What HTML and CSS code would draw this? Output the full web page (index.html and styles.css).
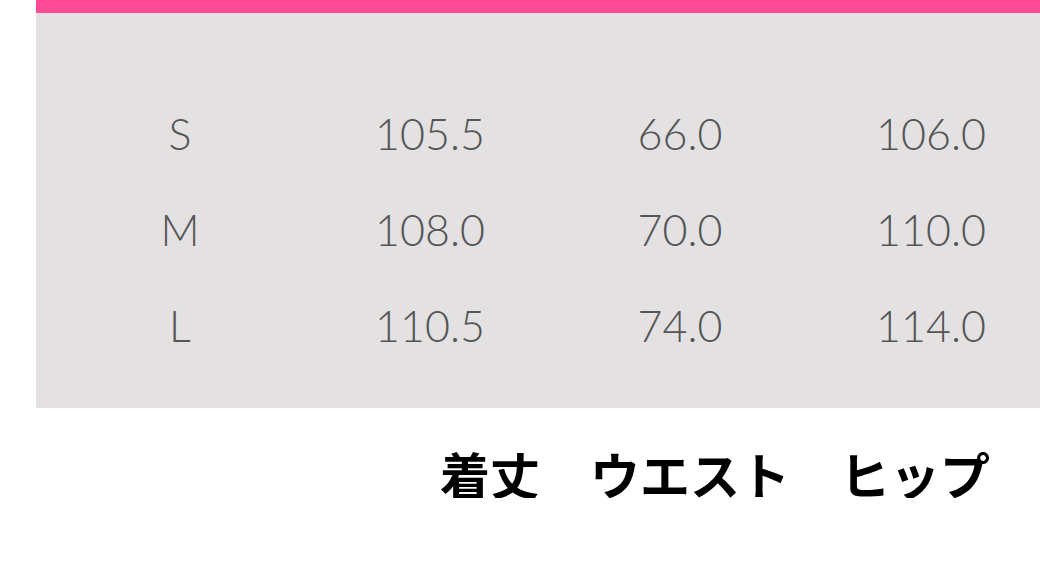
FILE: index.html
```html
<!DOCTYPE html>
<html lang="ja">
<head>
<meta charset="utf-8">
<link rel="stylesheet" href="styles.css">
</head>
<body>
<div class="panel">
  <div class="bar"></div>
  <div class="table">
    <div class="row"><span>S</span><span>105.5</span><span>66.0</span><span class="last">106.0</span></div>
    <div class="row"><span>M</span><span>108.0</span><span>70.0</span><span class="last">110.0</span></div>
    <div class="row"><span>L</span><span>110.5</span><span>74.0</span><span class="last">114.0</span></div>
  </div>
</div>
<p class="caption">着丈　ウエスト　ヒップ</p>
</body>
</html>
```
FILE: styles.css
```css
html, body {
  margin: 0;
  padding: 0;
  background: #ffffff;
}
.panel {
  margin-left: 36px;
}
.bar {
  height: 13px;
  background: #ff4a95;
}
.table {
  height: 395px;
  box-sizing: border-box;
  background: #e3e1e2;
  padding: 99px 0 0 19px;
  display: flex;
  flex-direction: column;
}
.row {
  display: grid;
  grid-template-columns: 250px 250px 250px 1fr;
  height: 96px;
  align-items: start;
}
.row span {
  text-align: center;
  font-family: Lato, "Open Sans", sans-serif;
  font-weight: 300;
  font-size: 43px;
  line-height: 1;
  color: #555;
}
.row .last {
  padding-left: 17px;
}
.caption {
  margin: 0;
  padding: 40px 0 0 440px;
  font-family: "Noto Sans CJK JP", sans-serif;
  font-weight: 700;
  font-size: 50px;
  line-height: 1;
  color: #000;
}
```
